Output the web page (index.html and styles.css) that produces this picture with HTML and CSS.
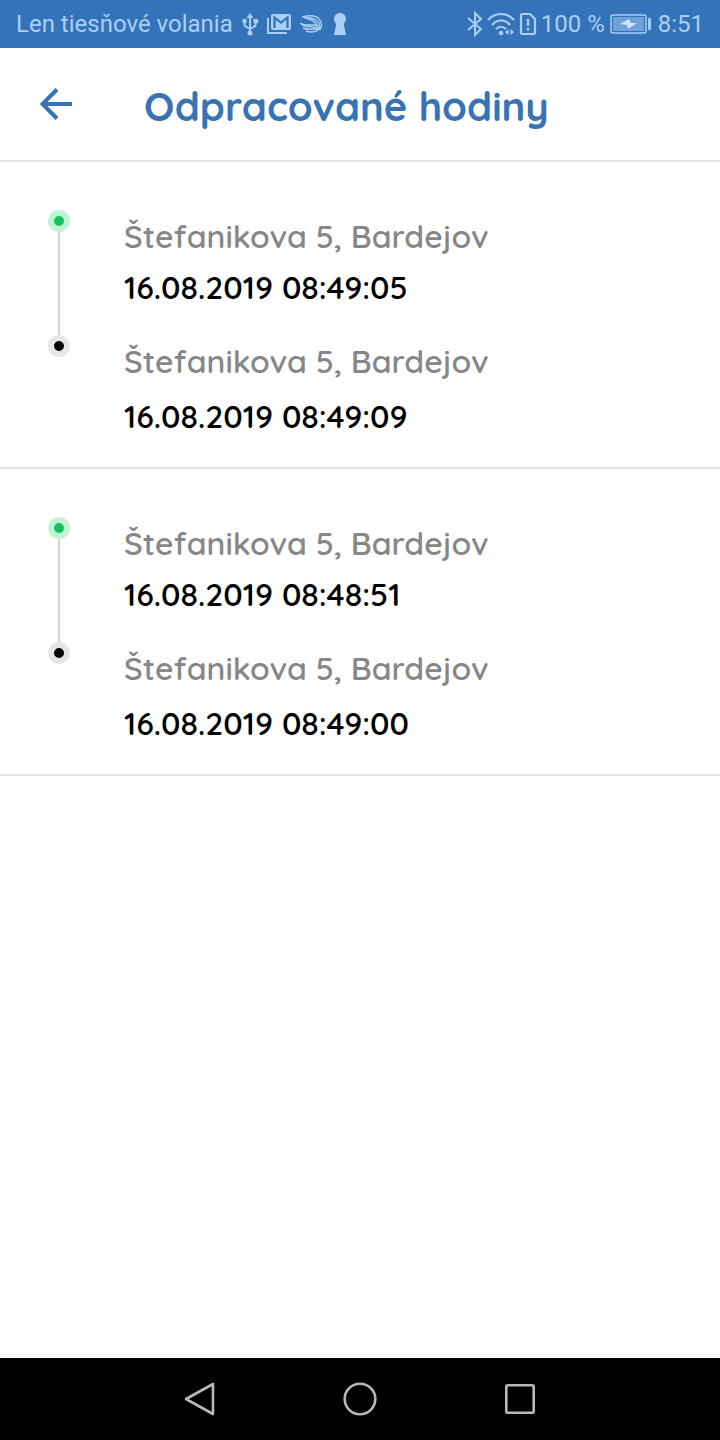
FILE: index.html
```html
<!DOCTYPE html>
<html lang="sk">

<head>
    <meta charset="UTF-8">
    <meta name="viewport" content="width=device-width, initial-scale=1.0">
    <title>Odpracované hodiny</title>
    <link rel="stylesheet" href="styles.css">
</head>

<body>
    <div class="status-bar">
        <div class="status-left">
            <span>Len tiesňové volania</span>
            <svg width="16" height="24" viewBox="0 0 16 24" fill="none" stroke="currentColor" stroke-width="2">
                <path d="M8 4v16M2.500 9v4q0 1 1 1.500L8 17M13.500 9v4q0 1-1 1.500L8 17" />
                <path d="M8 1l3.500 5h-7z" fill="currentColor" stroke="none" />
                <circle cx="8" cy="21" r="2.500" fill="currentColor" stroke="none" />
                <circle cx="2.500" cy="9" r="2.300" fill="currentColor" stroke="none" />
                <path d="M11.500 7H16v4.300h-4.500z" fill="currentColor" stroke="none" />
            </svg>
            <svg width="24" height="22" viewBox="0 0 24 22">
                <path d="M1 5v15h19" fill="none" stroke="currentColor" stroke-width="2" />
                <rect x="4" y="1" width="20" height="16" rx="2" fill="currentColor" />
                <path d="M7.500 15V4.500l6.500 5 6.500-5V15" fill="none" stroke="#3573b8" stroke-width="2.200" />
            </svg>
            <svg width="24" height="20" viewBox="0 0 24 20" fill="none" stroke="currentColor" stroke-width="1.500">
                <path d="M2 3c8-2 14-2 17 2 3 3 3 7 1 11" />
                <path d="M4 4c6-1 10 0 13 3 3 2 3 6 2 9" />
                <path d="M7 5c5 0 8 3 10 6 1 2 1 4 1 5" />
                <path d="M0 9c4 3 10 2 15 2 2 1 3 3 3 5" />
                <path d="M2 11c4 2 9 1 14 3M3 14c4 2 9 1 14 1M6 17c5 2 10 1 14-2" />
            </svg>
            <svg width="14" height="24" viewBox="0 0 14 24" fill="currentColor">
                <path d="M7 1a6 6 0 0 0-3.700 10.700L1 23h12l-2.300-11.300A6 6 0 0 0 7 1z" />
            </svg>
        </div>
        <div class="status-right">
            <svg width="16" height="26" viewBox="0 0 16 26" fill="none" stroke="currentColor" stroke-width="2">
                <path d="M1 7l13 11-6 6V2l6 6L1 19" />
            </svg>
            <svg width="28" height="24" viewBox="0 0 28 24" fill="none" stroke="currentColor" stroke-width="2.200">
                <path d="M1 8c7-8 19-8 26 0M5 13c5-6 13-6 18 0M9 17c3-3 7-3 10 0" />
                <circle cx="14" cy="21" r="2.300" fill="currentColor" stroke="none" />
                <path d="M21.500 17v6l-3.500-3zM23.500 17v6l3.500-3z" fill="currentColor" stroke="none" />
            </svg>
            <svg width="18" height="24" viewBox="0 0 18 24" fill="none" stroke="currentColor" stroke-width="2.200">
                <path d="M3 2h8l5 5v13a2 2 0 0 1-2 2H3a1 1 0 0 1-1-1V3a1 1 0 0 1 1-1z" />
                <path d="M9 7v7M9 16v2.500" stroke-width="2.400" />
            </svg>
            <span>100 %</span>
            <svg class="icon-battery" width="42" height="20" viewBox="0 0 42 20">
                <rect x="1" y="1" width="35" height="18" rx="2" fill="none" stroke="currentColor" stroke-width="1.500" />
                <rect x="3" y="3" width="31" height="14" fill="currentColor" opacity="0.500" />
                <path d="M10 10l9-5 2 4h6l-9 6-1-4z" fill="#cfe3fb" />
                <rect x="38" y="4" width="3" height="12" rx="1" fill="currentColor" />
            </svg>
            <span>8:51</span>
        </div>
    </div>

    <header class="header">
        <button class="back" type="button" aria-label="Späť">
            <svg width="32" height="32" viewBox="0 0 32 32" fill="none" stroke="currentColor" stroke-width="4">
                <path d="M32 16H3M17 1.500L2.500 16 17 30.500" />
            </svg>
        </button>
        <h1>Odpracované hodiny</h1>
    </header>

    <main class="entries">
        <section class="entry">
            <div class="stop start">
                <div class="track"><span class="dot"></span></div>
                <div class="info">
                    <p class="address">Štefanikova 5, Bardejov</p>
                    <p>16.08.2019 08:49:05</p>
                </div>
            </div>
            <div class="stop end">
                <div class="track"><span class="dot"></span></div>
                <div class="info">
                    <p class="address">Štefanikova 5, Bardejov</p>
                    <p>16.08.2019 08:49:09</p>
                </div>
            </div>
        </section>
        <section class="entry">
            <div class="stop start">
                <div class="track"><span class="dot"></span></div>
                <div class="info">
                    <p class="address">Štefanikova 5, Bardejov</p>
                    <p>16.08.2019 08:48:51</p>
                </div>
            </div>
            <div class="stop end">
                <div class="track"><span class="dot"></span></div>
                <div class="info">
                    <p class="address">Štefanikova 5, Bardejov</p>
                    <p>16.08.2019 08:49:00</p>
                </div>
            </div>
        </section>
    </main>

    <nav class="nav-bar">
        <button type="button" aria-label="Naspäť">
            <svg width="36" height="36" viewBox="0 0 36 36" fill="none" stroke="currentColor" stroke-width="2.600" stroke-linejoin="round">
                <path d="M4 18L31 3v30z" />
            </svg>
        </button>
        <button type="button" aria-label="Domov">
            <svg width="36" height="36" viewBox="0 0 36 36" fill="none" stroke="currentColor" stroke-width="2.600">
                <circle cx="18" cy="18" r="15.300" />
            </svg>
        </button>
        <button type="button" aria-label="Posledné">
            <svg width="36" height="36" viewBox="0 0 36 36" fill="none" stroke="currentColor" stroke-width="2.600">
                <rect x="4.300" y="4.300" width="27.400" height="27.400" rx="1.500" />
            </svg>
        </button>
    </nav>
</body>

</html>
```

FILE: styles.css
```css
* {
    box-sizing: border-box;
}

body {
    font-family: Quicksand, Lato, sans-serif;
    background-color: #fff;
    color: #000;
    margin: 0;
    min-height: 100vh;
    display: flex;
    flex-direction: column;
}

svg {
    display: block;
    flex-shrink: 0;
}

button {
    display: flex;
    align-items: center;
    justify-content: center;
    padding: 0;
    border: none;
    background: none;
    cursor: pointer;
}

.status-bar {
    display: flex;
    justify-content: space-between;
    height: 48px;
    padding: 0 16px;
    background-color: #3573b8;
    color: #a9cff8;
    font-family: Roboto, sans-serif;
    font-size: 24px;
    line-height: 48px;
    white-space: nowrap;
}

.status-left,
.status-right {
    display: flex;
    align-items: center;
}

.status-left {
    gap: 9px;
}

.status-right {
    gap: 4px;
}

.icon-battery {
    margin: 0 2px 0 1px;
}

.header {
    display: flex;
    align-items: center;
    height: 114px;
    padding: 0 40px;
    gap: 72px;
    border-bottom: 2px solid #e4e4e4;
    color: #3873b3;
}

.back {
    color: inherit;
}

h1 {
    margin: 0;
    padding-top: 4px;
    font-size: 40px;
    line-height: 48px;
}

.entries {
    flex: 1;
}

.entry {
    padding: 48px 48px 31px;
    border-bottom: 2px solid #e4e4e4;
}

.stop {
    display: flex;
    gap: 54px;
}

.track {
    display: flex;
    flex-direction: column;
    align-items: center;
    width: 22px;
}

.dot {
    width: 22px;
    height: 22px;
    border: 6px solid #e6e6e6;
    border-radius: 50%;
    background-color: #000;
}

.start .dot {
    border-color: #bff3d3;
    background-color: #14c25a;
}

/* line down to the next dot */
.start .track::after {
    content: "";
    flex: 1;
    width: 2px;
    background-color: #d3d3d3;
}

.info {
    display: flex;
    flex-direction: column;
    gap: 11px;
    padding-top: 6px;
    font-size: 32px;
    font-weight: 600;
    line-height: 40px;
}

.start .info {
    padding-bottom: 28px;
}

.end .info {
    gap: 15px;
}

.info p {
    margin: 0;
}

.address {
    color: #878787;
}

.nav-bar {
    display: flex;
    justify-content: center;
    gap: 124px;
    height: 82px;
    background-color: #000;
    color: #b8b8b8;
}

.nav-bar button {
    color: inherit;
}
```
